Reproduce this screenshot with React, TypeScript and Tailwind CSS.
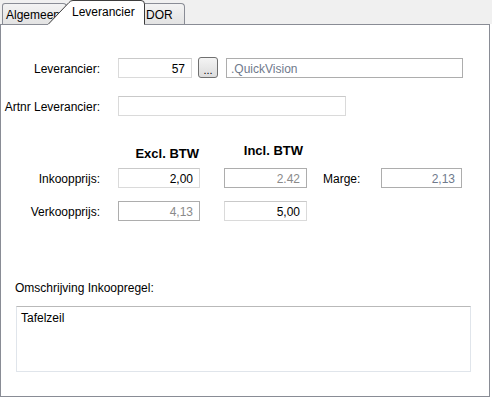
import React from "react"

const font = { fontFamily: '"Liberation Sans", Arial, sans-serif' }

function Box({
  value,
  width,
  disabled,
  align = "right",
  color,
}: {
  value?: string
  width: string
  disabled?: boolean
  align?: "left" | "right"
  color?: string
}) {
  return (
    <div
      className={`${width} h-[20px] flex items-center border leading-[14px] ${
        disabled ? "border-[#adadad]" : "border-[#dadada] border-t-[#c9c9c9]"
      } ${align === "right" ? "justify-end pr-[6px]" : "justify-start pl-[4px]"} ${
        color ?? "text-black"
      }`}
    >
      <span className="pt-[2px]">{value}</span>
    </div>
  )
}

function Label({ children }: { children: React.ReactNode }) {
  return (
    <div className="w-[99px] shrink-0 text-right leading-[14px] pt-[2px] text-black">
      {children}
    </div>
  )
}

export default function App() {
  return (
    <div className="w-[492px] h-[398px] bg-white text-[12px] overflow-hidden" style={font}>
      {/* Tabs */}
      <div className="relative z-10 h-[24px] bg-[#f0f0f0] flex items-start pl-[2px]">
        <div className="mt-[3px] w-[65px] h-[21px] border-l border-t border-r border-[#898c95] rounded-tl-[3px] rounded-tr-[4px] bg-gradient-to-b from-[#f3f3f3] to-[#e3e3e3] pl-[3px] pt-[4px] leading-[14px] overflow-hidden whitespace-nowrap">
          Algemeen
        </div>
        <div className="relative ml-[-19px] w-[97px] h-[25px] shrink-0">
          <svg width="97" height="25" className="absolute left-0 top-0">
            <path
              d="M0,25 L0.5,24 L21,2.5 Q22.5,0.5 25,0.5 L93,0.5 Q96.5,0.5 96.5,4 L96.5,25 Z"
              fill="#ffffff"
            />
            <path
              d="M0.5,24 L21,2.5 Q22.5,0.5 25,0.5 L93,0.5 Q96.5,0.5 96.5,4 L96.5,24.5"
              fill="none"
              stroke="#3c3c3c"
              strokeWidth="1"
            />
          </svg>
          <div className="relative pl-[24px] pt-[5px] leading-[14px] whitespace-nowrap">
            Leverancier
          </div>
        </div>
        <div className="mt-[3px] w-[40px] h-[21px] border-t border-r border-[#898c95] rounded-tr-[4px] bg-gradient-to-b from-[#f3f3f3] to-[#e3e3e3] pl-[1px] pt-[4px] leading-[14px]">
          DOR
        </div>
      </div>

      {/* Panel */}
      <div className="w-[490px] h-[373px] border border-[#898c95] pt-[32px]">
        <div className="flex items-center">
          <Label>Leverancier:</Label>
          <div className="ml-[18px]">
            <Box value="57" width="w-[74px]" />
          </div>
          <div className="ml-[6px] w-[20px] h-[21px] rounded-[3px] border border-[#707070] bg-gradient-to-b from-[#f4f4f4] to-[#dcdcdc] flex items-end justify-center pb-[1px] leading-[12px] text-[11px]">
            ...
          </div>
          <div className="ml-[8px]">
            <Box value=".QuickVision" width="w-[237px]" disabled align="left" color="text-[#6f7a8c]" />
          </div>
        </div>

        <div className="flex items-center mt-[18px]">
          <Label>Artnr Leverancier:</Label>
          <div className="ml-[18px]">
            <Box width="w-[228px]" />
          </div>
        </div>

        <div className="flex items-start mt-[27px] font-bold text-[13px] leading-[15px]">
          <div className="ml-[117px] w-[82px] text-right pr-[1px] mt-[3px]">Excl. BTW</div>
          <div className="ml-[24px] w-[83px] text-right pr-[4px]">Incl. BTW</div>
        </div>

        <div className="flex items-center mt-[7px]">
          <Label>Inkoopprijs:</Label>
          <div className="ml-[18px]">
            <Box value="2,00" width="w-[82px]" />
          </div>
          <div className="ml-[24px]">
            <Box value="2.42" width="w-[83px]" disabled color="text-[#8a8a8a]" />
          </div>
          <div className="ml-[16px] w-[58px] leading-[14px] pt-[2px]">Marge:</div>
          <Box value="2,13" width="w-[81px]" disabled color="text-[#6f7a8c]" />
        </div>

        <div className="flex items-center mt-[13px]">
          <Label>Verkoopprijs:</Label>
          <div className="ml-[18px]">
            <Box value="4,13" width="w-[82px]" disabled color="text-[#8a8a8a]" />
          </div>
          <div className="ml-[24px]">
            <Box value="5,00" width="w-[83px]" />
          </div>
        </div>

        <div className="mt-[60px] pl-[14px] leading-[14px]">Omschrijving Inkoopregel:</div>

        <div className="mt-[11px] ml-[15px] w-[455px] h-[66px] border border-[#e0e5eb] border-t-[#b9b9b9] pl-[4px] pt-[4px] leading-[14px]">
          Tafelzeil
        </div>
      </div>
    </div>
  )
}
